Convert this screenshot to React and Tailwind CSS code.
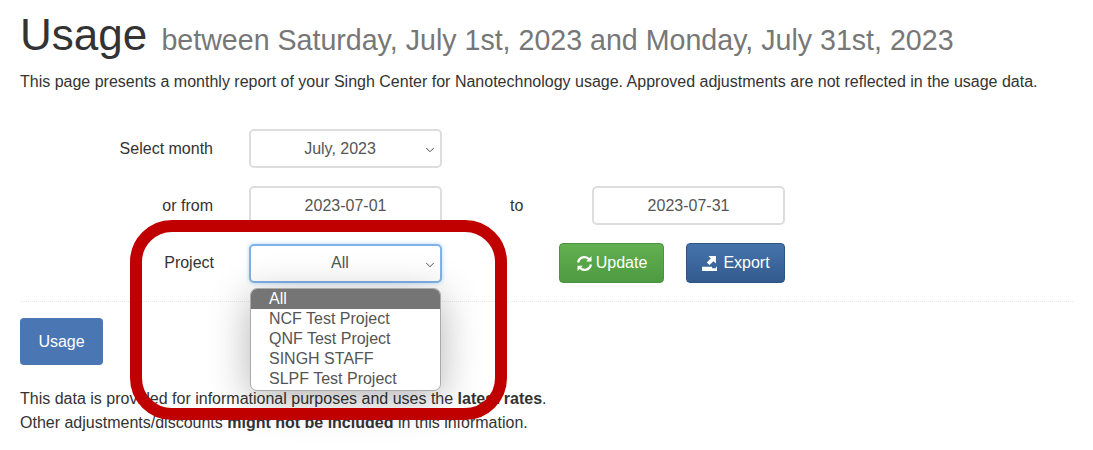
import React from 'react';
import { ChevronDown } from 'lucide-react';

const options = ['NCF Test Project', 'QNF Test Project', 'SINGH STAFF', 'SLPF Test Project'];

function Field({ children, focus }) {
  return (
    <div
      className={`relative w-[193px] h-[39px] bg-white rounded-[5px] border-2 flex items-center justify-center text-[16px] text-[#555] ${
        focus ? 'border-[#7fb2ea] shadow-[0_0_4px_rgba(102,175,233,0.5)]' : 'border-[#ddd]'
      }`}
    >
      {children}
    </div>
  );
}

function SelectField({ value, focus }) {
  return (
    <Field focus={focus}>
      <span className="pr-[11px]">{value}</span>
      <ChevronDown className="absolute right-[3px] top-[12px] w-[14px] h-[14px] text-[#444]" strokeWidth={1.6} />
    </Field>
  );
}

function UpdateIcon() {
  return (
    <svg viewBox="0 0 16 16" className="w-[17px] h-[17px]" fill="none" stroke="white" strokeWidth="2.2">
      <path d="M2 7a6 6 0 0 1 10.4-3" />
      <path d="M14 9a6 6 0 0 1-10.4 3" />
      <path d="M14.6 1v5h-5z" fill="white" stroke="none" />
      <path d="M1.4 15v-5h5z" fill="white" stroke="none" />
    </svg>
  );
}

function ExportIcon() {
  return (
    <svg viewBox="0 0 16 16" className="w-[17px] h-[17px]" fill="white">
      <path d="M7 1h7v7l-2.3-2.2L8 9.5 5.5 7l3.7-3.7z" />
      <path d="M1 11h9.5v1.5H14V11h1v4H1z" />
    </svg>
  );
}

export default function App() {
  return (
    <div className="relative w-[1093px] h-[450px] overflow-hidden bg-white font-['Liberation_Sans',Arial,sans-serif] text-[#333] text-[16px]">
      <div className="pl-[20px] pr-[20px]">
        <h1 className="pt-[11px] h-[58px] text-[44px] leading-[48px] text-[#333] whitespace-nowrap">
          Usage <small className="text-[28.6px] text-[#777] ml-[2px]">between Saturday, July 1st, 2023 and Monday, July 31st, 2023</small>
        </h1>
        <p className="mt-[13px] h-[22px] leading-[22px] whitespace-nowrap">
          This page presents a monthly report of your Singh Center for Nanotechnology usage. Approved adjustments are not reflected in the usage data.
        </p>

        <div className="mt-[36px] flex flex-col gap-[18px]">
          <div className="flex items-center">
            <label className="w-[193px] text-right">Select month</label>
            <div className="ml-[36px]">
              <SelectField value="July, 2023" />
            </div>
          </div>
          <div className="flex items-center">
            <label className="w-[193px] text-right">or from</label>
            <div className="ml-[36px]">
              <Field>2023-07-01</Field>
            </div>
            <span className="ml-[68px] w-[82px]">to</span>
            <Field>2023-07-31</Field>
          </div>
          <div className="flex items-center h-[40px]">
            <label className="w-[194px] text-right">Project</label>
            <div className="ml-[35px]">
              <SelectField value="All" focus />
            </div>
            <button className="ml-[117px] w-[105px] h-[40px] rounded-[4px] border border-[#4a9440] bg-gradient-to-b from-[#62b04f] to-[#4f9a42] text-white flex items-center justify-center gap-[3px]">
              <UpdateIcon />
              Update
            </button>
            <button className="ml-[22px] w-[99px] h-[40px] rounded-[4px] border border-[#2e5482] bg-gradient-to-b from-[#4474ab] to-[#335b8e] text-white flex items-center justify-center gap-[5px]">
              <ExportIcon />
              Export
            </button>
          </div>
        </div>

        <div className="mt-[18px] border-t border-dotted border-[#e6e6e6]"></div>

        <button className="mt-[16px] block w-[83px] h-[47px] rounded-[4px] bg-[#4a77b4] text-white">Usage</button>

        <p className="mt-[22px] leading-[24px] whitespace-nowrap">
          This data is provided for informational purposes and uses the <b>latest rates</b>.
          <br />
          Other adjustments/discounts <b>might not be included</b> in this information.
        </p>
      </div>

      {/* open select list */}
      <div className="absolute left-[250px] top-[288px] w-[191px] h-[103px] rounded-[7px] border border-[#aaa] bg-white overflow-hidden shadow-[0_8px_40px_rgba(0,0,0,0.3)] text-[16px] leading-[20px] text-[#555]">
        <div className="bg-[#757575] text-white pl-[18px] h-[20px]">All</div>
        {options.map((o) => (
          <div key={o} className="pl-[18px] h-[20px]">{o}</div>
        ))}
      </div>

      {/* red annotation frame */}
      <div className="absolute left-[130px] top-[220px] w-[377px] h-[200px] rounded-[42px] border-[12px] border-[#c00000] pointer-events-none"></div>
    </div>
  );
}
